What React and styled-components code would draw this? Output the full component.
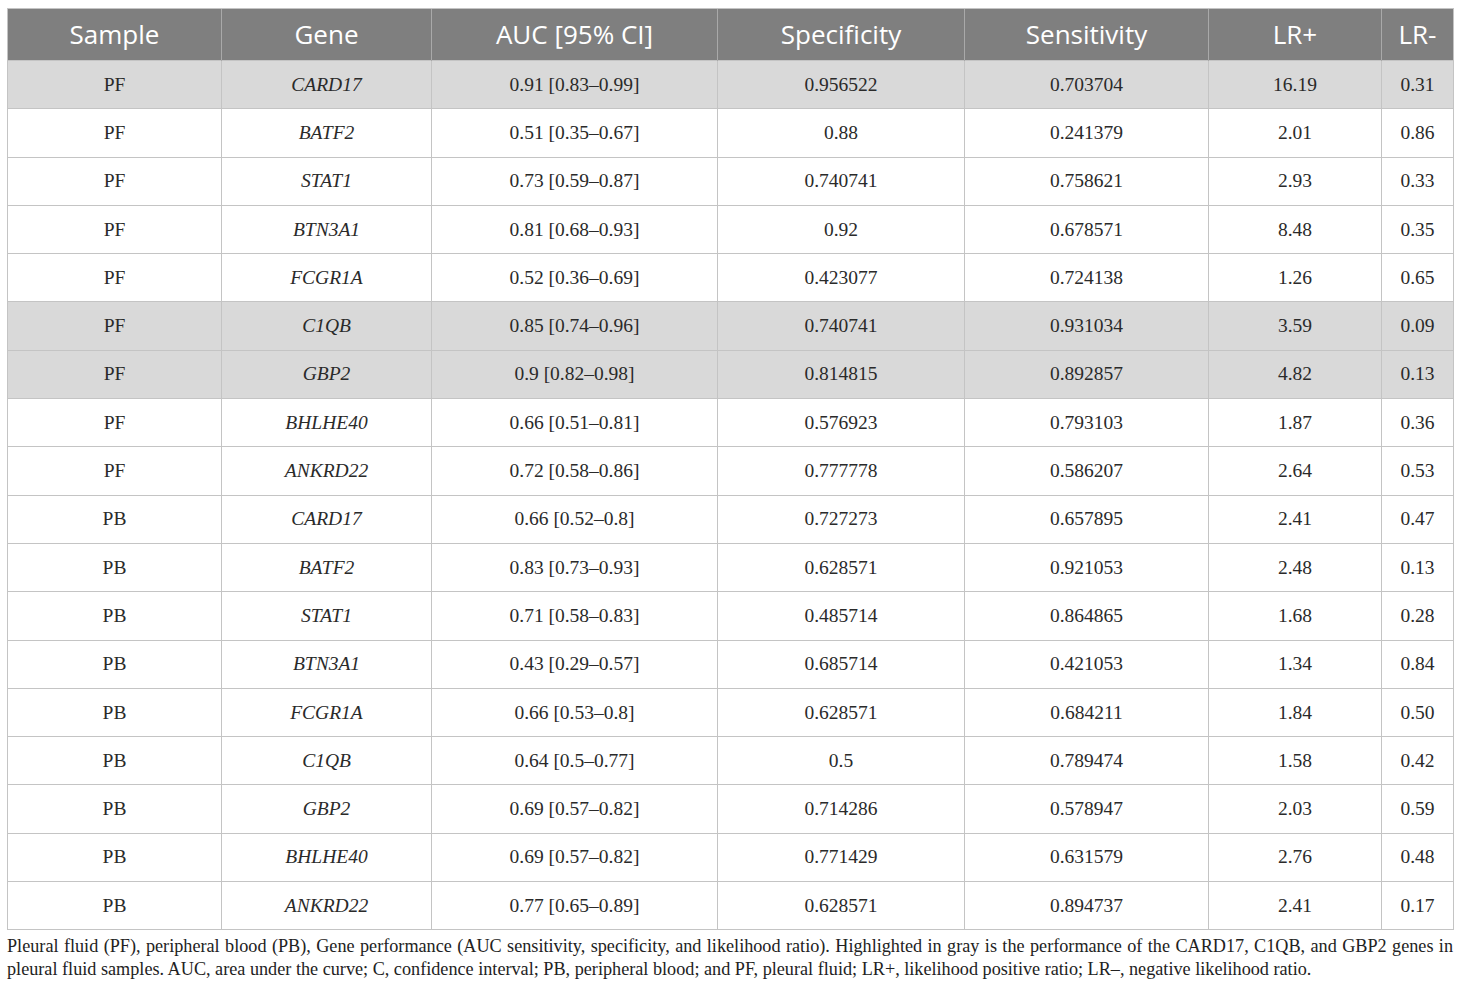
import React from 'react';
import styled, { createGlobalStyle } from 'styled-components';

const GlobalStyle = createGlobalStyle`
  body {
    margin: 0;
    background: #ffffff;
  }
`;

const Page = styled.div`
  padding: 8px 7px 0 7px;
  width: 1446px;
`;

const Table = styled.table`
  width: 1446px;
  border-collapse: collapse;
  table-layout: fixed;
  border: 1px solid #c4c4c4;
`;

const HeadCell = styled.th`
  height: 49px;
  padding: 0 0 2px 0;
  background: #7f7f7f;
  color: #ffffff;
  font-family: 'Open Sans', 'Noto Sans', sans-serif;
  font-weight: 400;
  font-size: 26px;
  line-height: 30px;
  text-align: center;
  white-space: nowrap;
  border-left: 1px solid #a9a9a9;
  border-top: 1px solid #c4c4c4;

  &:first-child {
    border-left: 1px solid #c4c4c4;
  }
`;

const Row = styled.tr`
  background: ${props => (props.highlight ? '#d9d9d9' : '#ffffff')};
`;

const Cell = styled.td`
  height: 47.3px;
  padding: 0;
  text-align: center;
  font-family: 'Liberation Serif', 'DejaVu Serif', serif;
  font-size: 19.5px;
  color: #2a2a2a;
  border: 1px solid #c4c4c4;
  font-style: ${props => (props.italic ? 'italic' : 'normal')};
`;

const Caption = styled.p`
  margin: 5px 0 0 0;
  font-family: 'Liberation Serif', 'DejaVu Serif', serif;
  font-size: 18.2px;
  line-height: 23px;
  color: #222222;
  text-align: justify;
`;

const columns = [
  { label: 'Sample', width: 214 },
  { label: 'Gene', width: 210 },
  { label: 'AUC [95% CI]', width: 286 },
  { label: 'Specificity', width: 247 },
  { label: 'Sensitivity', width: 244 },
  { label: 'LR+', width: 173 },
  { label: 'LR-', width: 72 }
];

const rows = [
  ['PF', 'CARD17', '0.91 [0.83–0.99]', '0.956522', '0.703704', '16.19', '0.31', true],
  ['PF', 'BATF2', '0.51 [0.35–0.67]', '0.88', '0.241379', '2.01', '0.86'],
  ['PF', 'STAT1', '0.73 [0.59–0.87]', '0.740741', '0.758621', '2.93', '0.33'],
  ['PF', 'BTN3A1', '0.81 [0.68–0.93]', '0.92', '0.678571', '8.48', '0.35'],
  ['PF', 'FCGR1A', '0.52 [0.36–0.69]', '0.423077', '0.724138', '1.26', '0.65'],
  ['PF', 'C1QB', '0.85 [0.74–0.96]', '0.740741', '0.931034', '3.59', '0.09', true],
  ['PF', 'GBP2', '0.9 [0.82–0.98]', '0.814815', '0.892857', '4.82', '0.13', true],
  ['PF', 'BHLHE40', '0.66 [0.51–0.81]', '0.576923', '0.793103', '1.87', '0.36'],
  ['PF', 'ANKRD22', '0.72 [0.58–0.86]', '0.777778', '0.586207', '2.64', '0.53'],
  ['PB', 'CARD17', '0.66 [0.52–0.8]', '0.727273', '0.657895', '2.41', '0.47'],
  ['PB', 'BATF2', '0.83 [0.73–0.93]', '0.628571', '0.921053', '2.48', '0.13'],
  ['PB', 'STAT1', '0.71 [0.58–0.83]', '0.485714', '0.864865', '1.68', '0.28'],
  ['PB', 'BTN3A1', '0.43 [0.29–0.57]', '0.685714', '0.421053', '1.34', '0.84'],
  ['PB', 'FCGR1A', '0.66 [0.53–0.8]', '0.628571', '0.684211', '1.84', '0.50'],
  ['PB', 'C1QB', '0.64 [0.5–0.77]', '0.5', '0.789474', '1.58', '0.42'],
  ['PB', 'GBP2', '0.69 [0.57–0.82]', '0.714286', '0.578947', '2.03', '0.59'],
  ['PB', 'BHLHE40', '0.69 [0.57–0.82]', '0.771429', '0.631579', '2.76', '0.48'],
  ['PB', 'ANKRD22', '0.77 [0.65–0.89]', '0.628571', '0.894737', '2.41', '0.17']
];

export default function App() {
  return (
    <>
      <GlobalStyle />
      <Page>
        <Table>
          <colgroup>
            {columns.map(col => (
              <col key={col.label} style={{ width: col.width }} />
            ))}
          </colgroup>
          <thead>
            <tr>
              {columns.map(col => (
                <HeadCell key={col.label}>{col.label}</HeadCell>
              ))}
            </tr>
          </thead>
          <tbody>
            {rows.map((r, i) => (
              <Row key={i} highlight={r[7]}>
                {r.slice(0, 7).map((v, j) => (
                  <Cell key={j} italic={j === 1}>
                    {v}
                  </Cell>
                ))}
              </Row>
            ))}
          </tbody>
        </Table>
        <Caption>
          Pleural fluid (PF), peripheral blood (PB), Gene performance (AUC sensitivity, specificity, and likelihood ratio). Highlighted in gray is the performance of the CARD17, C1QB, and GBP2 genes in pleural fluid samples. AUC, area under the curve; C, confidence interval; PB, peripheral blood; and PF, pleural fluid; LR+, likelihood positive ratio; LR–, negative likelihood ratio.
        </Caption>
      </Page>
    </>
  );
}
